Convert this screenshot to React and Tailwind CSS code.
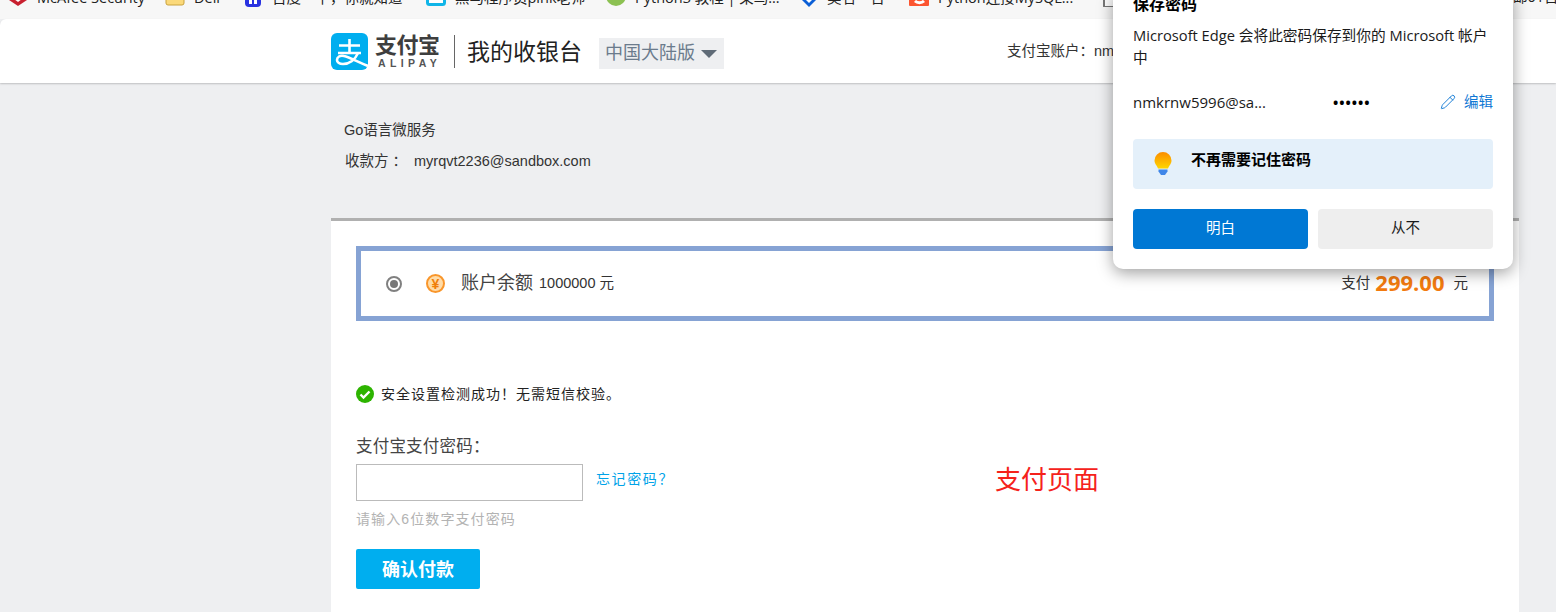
import React from "react";
import { Pencil } from "lucide-react";

const SANS = "font-['Liberation_Sans','Noto_Sans_CJK_SC',sans-serif]";
const UI = "font-['Open_Sans','Noto_Sans_CJK_SC',sans-serif]";

// the bookmark bar is cut off by the top of the picture, so only the lower part of these shows
const ShieldIcon = () => (
  <svg width="20" height="18" viewBox="0 0 20 18">
    <path d="M1 5h18v6l-9 6-9-6z" fill="#c8202f" />
    <path d="M6 5h8v5l-4 3-4-3z" fill="#fff" />
  </svg>
);

const FolderIcon = () => (
  <svg width="20" height="18" viewBox="0 0 20 18">
    <rect x="1" y="-4" width="18" height="20" rx="2" fill="#fbd97a" stroke="#c9a23c" />
  </svg>
);

const BaiduIcon = () => (
  <svg width="20" height="18" viewBox="0 0 20 18">
    <rect x="2" y="8" width="16" height="10" rx="4" fill="#2932e1" />
    <rect x="6" y="11" width="3" height="4" fill="#fff" />
    <rect x="11" y="11" width="3" height="4" fill="#fff" />
  </svg>
);

const CyanIcon = () => (
  <svg width="20" height="18" viewBox="0 0 20 18">
    <rect x="1.500" y="-3" width="17" height="18.500" rx="2" fill="#fff" stroke="#10b5e8" strokeWidth="3" />
  </svg>
);

const PythonIcon = () => (
  <svg width="20" height="18" viewBox="0 0 20 18">
    <circle cx="10" cy="7" r="10" fill="#8cc152" />
    <rect x="5" y="0" width="10" height="10" fill="#dfe8cf" />
  </svg>
);

const DiamondIcon = () => (
  <svg width="18" height="18" viewBox="0 0 18 18">
    <path d="M9 18l8-8-3-6H4l-3 6z" fill="#0b5fd6" />
    <path d="M9 14l4-4-2-4H7l-2 4z" fill="#fff" />
  </svg>
);

const CsdnIcon = () => (
  <svg width="20" height="18" viewBox="0 0 20 18">
    <rect x="0" y="-3" width="20" height="20" rx="1" fill="#fc5531" />
    <path d="M15 12a6 5 0 0 1-9 0" fill="none" stroke="#fff" strokeWidth="3" />
  </svg>
);

const GreyIcon = () => (
  <svg width="14" height="18" viewBox="0 0 14 18">
    <rect x="1" y="2" width="12" height="16" rx="1" fill="#fff" stroke="#777" strokeWidth="2" />
  </svg>
);

const bookmarks = [
  { icon: <ShieldIcon />, text: "McAfee Security", w: "w-[165px]", pl: "pl-[8px]" },
  { icon: <FolderIcon />, text: "Dell", w: "w-[78px]", pl: "pl-0" },
  { icon: <BaiduIcon />, text: "百度一下，你就知道", w: "w-[183px]", pl: "pl-0" },
  { icon: <CyanIcon />, text: "黑马程序员pink老师", w: "w-[180px]", pl: "pl-0" },
  { icon: <PythonIcon />, text: "Python3 教程 | 菜鸟...", w: "w-[194px]", pl: "pl-0" },
  { icon: <DiamondIcon />, text: "美名一台", w: "w-[109px]", pl: "pl-0" },
  { icon: <CsdnIcon />, text: "Python连接MySQL...", w: "w-[194px]", pl: "pl-0" },
  { icon: <GreyIcon />, text: "", w: "w-[410px]", pl: "pl-0" },
];

const BookmarkBar = () => (
  <div className={`flex h-[19px] shrink-0 items-start overflow-hidden bg-[#f7f7f7] ${UI}`}>
    {bookmarks.map((b) => (
      <div key={b.w + b.text} className={`flex shrink-0 items-start gap-[9px] ${b.w} ${b.pl}`}>
        <div className="-mt-[11px] shrink-0">{b.icon}</div>
        {b.text && (
          <span className="-mt-[12px] whitespace-nowrap text-[14.5px] leading-[20px] text-[#222]">{b.text}</span>
        )}
      </div>
    ))}
    <span className="-mt-[13px] whitespace-nowrap text-[14.5px] leading-[20px] text-[#222]">邮01日</span>
  </div>
);

const AlipayLogo = () => (
  <div className="flex items-center">
    <svg width="37" height="37" viewBox="0 0 37 37" className="shrink-0">
      <rect width="37" height="37" rx="6" fill="#00aeef" />
      <path d="M8 12.500h21M18.500 6v13M7 20h23" fill="none" stroke="#fff" strokeWidth="2.600" />
      <path d="M27 20c-3 7-9 11-15 11-4 0-6-2-6-4 0-3 3-5 7-4 5 1 12 5 24 10" fill="none" stroke="#fff" strokeWidth="2.600" />
    </svg>
    <div className="ml-[7px] flex w-[72px] flex-col">
      <span className="text-[22px] font-bold leading-[24px] tracking-[-0.5px] whitespace-nowrap text-[#3e3e3e]">支付宝</span>
      <span className="ml-[3px] text-[10.5px] font-bold leading-[11px] tracking-[4.4px] whitespace-nowrap text-[#555]">ALIPAY</span>
    </div>
  </div>
);

const Header = () => (
  <div className="relative z-10 flex h-[64px] shrink-0 rounded-tl-[6px] bg-white pl-[331px] shadow-[0_1px_2px_rgba(0,0,0,0.2)]">
    <div className="flex w-[1188px] items-center">
      <AlipayLogo />
      <div className="ml-[7px] h-[33px] w-px bg-[#666]" />
      <span className="ml-[12px] mt-[2px] text-[23px] leading-none whitespace-nowrap text-[#222]">我的收银台</span>
      <div className="ml-[17px] mt-[4px] flex h-[31px] w-[125px] items-center bg-[#eeeff1] pl-[6px]">
        <span className="text-[18px] whitespace-nowrap text-[#6b7b8c]">中国大陆版</span>
        <span className="ml-[6px] mt-[2px] h-0 w-0 border-x-[8px] border-t-[8px] border-x-transparent border-t-[#5f6b77]" />
      </div>
      <span className="ml-[283px] mt-[1px] text-[14.5px] whitespace-nowrap text-[#333]">支付宝账户：nmkrnw5996@sandbox.com</span>
    </div>
  </div>
);

const OrderInfo = () => (
  <div className="ml-[344px] flex h-[135px] shrink-0 flex-col pt-[35px] text-[14.5px] text-[#333]">
    <span className="leading-[24px]">Go语言微服务</span>
    <div className="mt-[7px] flex pl-[1px] leading-[24px]">
      <span>收款方 ：</span>
      <span className="ml-[7px]">myrqvt2236@sandbox.com</span>
    </div>
  </div>
);

const CoinIcon = () => (
  <span className="flex h-[19px] w-[19px] items-center justify-center rounded-full border-2 border-[#f9962b] bg-[#ffdca8] text-[14px] font-bold leading-none text-[#f07f09]">
    ¥
  </span>
);

const BalanceBox = () => (
  <div className="flex h-[75px] w-[1138px] items-center justify-between border-[5px] border-[#86a3d4]">
    <div className="flex items-center">
      <span className="ml-[25px] flex h-[16px] w-[16px] items-center justify-center rounded-full border-2 border-[#808080]">
        <span className="h-[8px] w-[8px] rounded-full bg-[#777]" />
      </span>
      <span className="ml-[24px]"><CoinIcon /></span>
      <span className="ml-[16px] text-[18px] text-[#444]">账户余额</span>
      <span className="ml-[6px] text-[14.5px] text-[#333]">1000000 元</span>
    </div>
    <div className="flex items-center pr-[21px] text-[14.5px] text-[#333]">
      <span>支付</span>
      <span className="ml-[5px] -mt-[3px] font-['Open_Sans',sans-serif] text-[22px] font-bold leading-none text-[#f37b0f]">299.00</span>
      <span className="ml-[9px]">元</span>
    </div>
  </div>
);

const CheckIcon = () => (
  <svg width="18" height="18" viewBox="0 0 18 18" className="shrink-0">
    <circle cx="9" cy="9" r="9" fill="#2db400" />
    <path d="M4.500 9.500l3 3 6-6" fill="none" stroke="#fff" strokeWidth="2.400" />
  </svg>
);

const PayForm = () => (
  <div className="relative z-0 ml-[331px] flex w-[1188px] flex-1 flex-col border-t-[3px] border-[#b0b0b0] bg-white pl-[25px] pt-[25px]">
    <BalanceBox />
    <div className="mt-[63px] flex items-center">
      <CheckIcon />
      <span className="ml-[7px] text-[14px] leading-[20px] tracking-[1px] text-[#222]">安全设置检测成功！无需短信校验。</span>
    </div>
    <span className="mt-[30px] text-[16.5px] leading-[24px] tracking-[0.2px] text-[#444]">支付宝支付密码：</span>
    <div className="mt-[6px] flex items-center">
      <input type="text" className="h-[37px] w-[227px] border border-[#bbb] bg-white" />
      <a className="-mt-[6px] ml-[13px] text-[14px] tracking-[1.6px] text-[#00a3e8]">忘记密码？</a>
    </div>
    <span className="mt-[6px] text-[14px] leading-[24px] tracking-[1.1px] text-[#b3b3b3]">请输入6位数字支付密码</span>
    <button className="mt-[18px] h-[40px] w-[124px] rounded-[2px] bg-[#00aeef] pt-[2px] text-[18px] font-bold text-white">确认付款</button>
    <span className="absolute left-[664px] top-[240px] text-[26px] leading-[38px] whitespace-nowrap text-[#f5221b]">支付页面</span>
  </div>
);

const Bulb = () => (
  <svg width="20" height="26" viewBox="0 0 20 26" className="shrink-0">
    <defs>
      <linearGradient id="bulbGrad" x1="0" y1="0" x2="0" y2="1">
        <stop offset="0" stopColor="#fb8c00" />
        <stop offset="1" stopColor="#ffd600" />
      </linearGradient>
    </defs>
    <path d="M10 1a8.500 8.500 0 0 0-8.500 8.500c0 3.500 2.500 5 3.500 8h10c1-3 3.500-4.500 3.500-8A8.500 8.500 0 0 0 10 1z" fill="url(#bulbGrad)" />
    <path d="M5.500 18.500h9v2l-2.500 3.500h-4l-2.500-3.500z" fill="#3f86e8" />
  </svg>
);

const SavePasswordPopup = () => (
  <div className={`absolute left-[1113px] -top-[12px] z-20 h-[281px] w-[400px] rounded-[10px] bg-white px-[20px] shadow-[0_4px_16px_rgba(0,0,0,0.38)] ${UI}`}>
    <h2 className="mt-[3px] text-[16px] font-bold leading-[26px] text-black">保存密码</h2>
    <p className="mt-[7px] w-[360px] text-[14.7px] leading-[22px] text-[#1a1a1a]">Microsoft Edge 会将此密码保存到你的 Microsoft 帐户中</p>
    <div className="mt-[23px] flex h-[22px] items-center text-[15px] text-[#1a1a1a]">
      <span className="w-[200px] whitespace-nowrap">nmkrnw5996@sa...</span>
      <span className="text-[14px] font-bold tracking-[1px] text-black">••••••</span>
      <div className="ml-auto flex items-center gap-[8px] text-[#0f78d4]">
        <Pencil size={16} strokeWidth={1.400} />
        <span className="text-[14.5px]">编辑</span>
      </div>
    </div>
    <div className="mt-[26px] flex h-[50px] items-start rounded-[4px] bg-[#e4f0fa] pl-[20px] pt-[12px]">
      <Bulb />
      <span className="ml-[18px] -mt-[3px] text-[15px] font-bold leading-[22px] text-black">不再需要记住密码</span>
    </div>
    <div className="mt-[20px] flex gap-[10px]">
      <button className="h-[40px] w-[175px] rounded-[4px] bg-[#0078d4] pb-[2px] text-[14.5px] text-white">明白</button>
      <button className="h-[40px] w-[175px] rounded-[4px] bg-[#eeeeee] pb-[2px] text-[14.5px] text-[#1a1a1a]">从不</button>
    </div>
  </div>
);

export default function App() {
  return (
    <div className={`relative flex h-[612px] w-[1556px] flex-col overflow-hidden bg-[#eeeff1] ${SANS}`}>
      <BookmarkBar />
      <Header />
      <OrderInfo />
      <PayForm />
      <SavePasswordPopup />
    </div>
  );
}
